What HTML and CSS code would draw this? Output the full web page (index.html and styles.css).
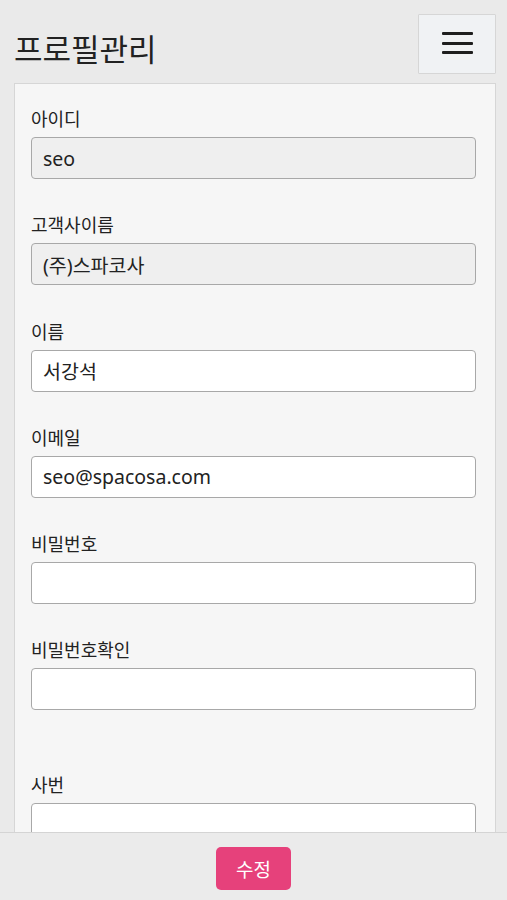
FILE: index.html
```html
<!DOCTYPE html>
<html lang="ko">
<head>
    <meta charset="UTF-8">
    <meta name="viewport" content="width=device-width, initial-scale=1.0">
    <title>프로필관리</title>
    <link rel="stylesheet" href="styles.css">
</head>
<body>

    <header class="top-bar">
        <h1 class="page-title">프로필관리</h1>
        <button type="button" class="menu-btn" aria-label="메뉴">
            <span></span><span></span><span></span>
        </button>
    </header>

    <div class="card">
        <form id="profileForm">
            <div class="field">
                <label for="userid">아이디</label>
                <input type="text" id="userid" value="seo" disabled>
            </div>

            <div class="field">
                <label for="company">고객사이름</label>
                <input type="text" id="company" value="(주)스파코사" disabled>
            </div>

            <div class="field">
                <label for="name">이름</label>
                <input type="text" id="name" value="서강석">
            </div>

            <div class="field">
                <label for="email">이메일</label>
                <input type="email" id="email" value="seo@spacosa.com">
            </div>

            <div class="field">
                <label for="password">비밀번호</label>
                <input type="password" id="password">
            </div>

            <div class="field">
                <label for="password2">비밀번호확인</label>
                <input type="password" id="password2">
            </div>

            <div class="field field-gap">
                <label for="empno">사번</label>
                <input type="text" id="empno">
            </div>
        </form>
    </div>

    <footer class="bottom-bar">
        <button type="submit" form="profileForm" class="save-btn">수정</button>
    </footer>

</body>
</html>
```

FILE: styles.css
```css
/* 기본 */
body {
    font-family: "Noto Sans", "Noto Sans CJK KR", sans-serif;
    background-color: #eaeaea;
    color: #222;
    margin: 0;
    padding: 0 0 90px;
}

.top-bar {
    display: flex;
    justify-content: space-between;
    align-items: center;
    padding: 14px 11px 9px 14px;
}

.page-title {
    font-family: "Noto Sans CJK KR", sans-serif;
    font-size: 31px;
    font-weight: 400;
    line-height: 40px;
    margin: 7px 0 0;
}

.menu-btn {
    width: 78px;
    height: 60px;
    background-color: #f0f2f4;
    border: 1px solid #d6d6d6;
    border-radius: 1px;
    display: flex;
    flex-direction: column;
    justify-content: center;
    align-items: center;
    gap: 6.5px;
    padding: 0 0 2px;
    cursor: pointer;
}

.menu-btn span {
    display: block;
    width: 31px;
    height: 3px;
    background-color: #1e1e1e;
    border-radius: 1px;
}

.card {
    margin: 0 11px 0 14px;
    background-color: #f6f6f6;
    border: 1px solid #d6d6d6;
    padding: 22px 19px 20px 16px;
}

.field {
    margin-bottom: 33.3px;
}

.field-gap {
    margin-top: 62px;
}

label {
    display: block;
    font-family: "Noto Sans CJK KR", sans-serif;
    font-size: 18px;
    line-height: 24px;
    margin-bottom: 7px;
}

input {
    display: block;
    width: 100%;
    height: 42px;
    box-sizing: border-box;
    padding: 0 11px;
    font-family: "Noto Sans", "Noto Sans CJK KR", sans-serif;
    font-size: 19.5px;
    color: #222;
    background-color: #fff;
    border: 1px solid #a8a8a8;
    border-radius: 4px;
}

input:disabled {
    background-color: #efefef;
    color: #222;
}

.bottom-bar {
    position: fixed;
    left: 0;
    right: 0;
    bottom: 0;
    height: 67px;
    background-color: #ebebeb;
    border-top: 1px solid #d4d4d4;
    display: flex;
    justify-content: center;
    align-items: center;
}

.save-btn {
    width: 75px;
    height: 43px;
    background-color: #e6417b;
    color: #fff;
    border: none;
    border-radius: 5px;
    font-family: "Noto Sans CJK KR", sans-serif;
    font-size: 19px;
    cursor: pointer;
    margin-top: 4px;
}
```
